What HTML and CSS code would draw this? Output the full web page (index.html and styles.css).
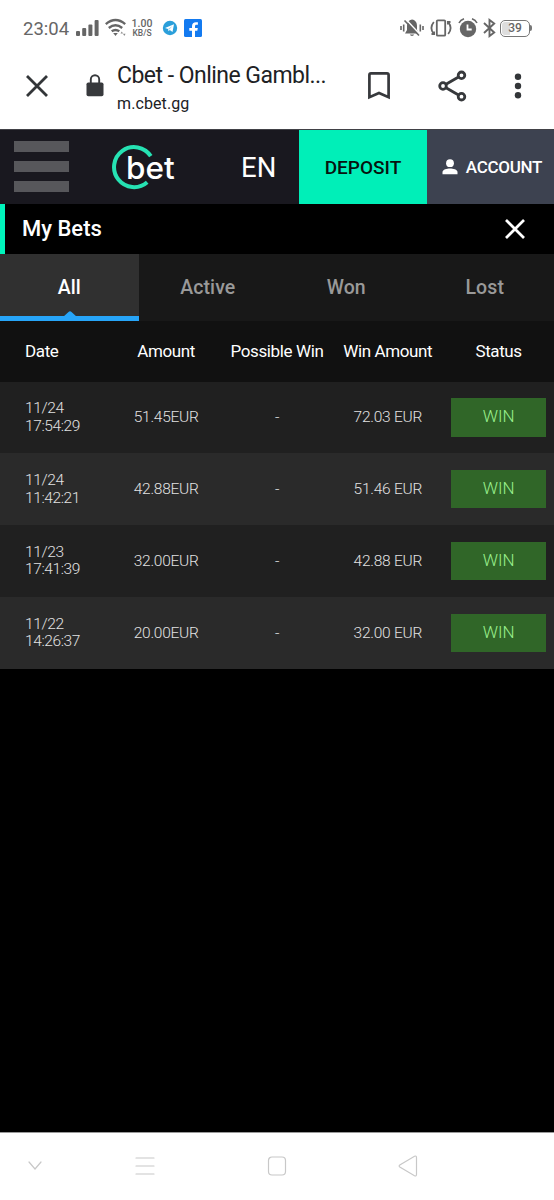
FILE: index.html
```html
<!DOCTYPE html>
<html lang="en">
<head>
<meta charset="utf-8">
<title>Cbet - My Bets</title>
<link rel="stylesheet" href="styles.css">
</head>
<body>
<div class="status-bar">
  <span class="clock">23:04</span>
  <svg class="ic-signal" width="24" height="20" viewBox="0 0 24 20" fill="#666"><rect x="0" y="13" width="4" height="5" rx="1"/><rect x="6.2" y="10" width="4" height="8" rx="1"/><rect x="12.4" y="6.5" width="4" height="11.5" rx="1"/><rect x="18.6" y="2" width="4" height="16" rx="1"/></svg>
  <svg class="ic-wifi" width="22" height="20" viewBox="0 0 22 20" fill="none" stroke="#666" stroke-width="2.4"><path d="M.8 6.200Q10.500-2 20.200 6.200M3.800 10Q10.500 4.500 17.200 10M6.700 13.300Q10.500 10.500 14.300 13.300"/><path d="M8.200 15h4.600l-2.300 3z" fill="#666" stroke="none"/><path d="M15.500 15.500h2.500l-1.200-2zM18 15.800h2.600l-1.300 2.200z" fill="#888" stroke="none"/></svg>
  <span class="speed"><span class="speed-num">1.00</span><span class="speed-unit">KB/S</span></span>
  <svg class="ic-telegram" width="16" height="16" viewBox="0 0 16 16"><circle cx="8" cy="8" r="7.200" fill="#2b9fda"/><path d="M3 8l9-3.700-1.500 7.700-2.700-2-1.300 1.300-.4-2.300z" fill="#fff"/><path d="M6 9l4.500-3-3.200 3.600z" fill="#9bcfea"/></svg>
  <svg class="ic-fb" width="18" height="18" viewBox="0 0 18 18"><rect width="18" height="18" rx="1.500" fill="#137af0"/><path d="M8 18v-6.300H5.300V9H8V7.200C8 4.500 9.500 3.200 12 3.200l1.900.1v2.500h-1.300c-1.300 0-1.600.6-1.600 1.600V9h2.800l-.5 2.700H11V18z" fill="#fff"/></svg>
  <div class="status-right">
    <svg width="24" height="20" viewBox="0 0 24 20"><path d="M12 1.500c3.500.6 5 3 5 6.500v4l2 3.500H5L7 12V8c0-3.500 1.500-5.900 5-6.500zM9.800 16.500h4.400a2.300 2 0 0 1-4.400 0z" fill="#666"/><path d="M5.800 1.300l14 15" stroke="#fff" stroke-width="1.600"/><path d="M4.500 2.500l14.500 15M1 8v4M3.700 6.500v7M20.300 6.500v7M23 8v4" stroke="#666" stroke-width="1.600"/></svg>
    <svg width="22" height="20" viewBox="0 0 22 20" fill="none" stroke="#666" stroke-width="1.800"><rect x="6.800" y="2.300" width="8.400" height="15.400" rx="1"/><path d="M3.800 4Q-1 10 3.800 16M18.200 4q4.800 6 0 12M1.500 16h2.600v-2.500M20.500 4h-2.600v2.500"/></svg>
    <svg width="20" height="20" viewBox="0 0 20 20" fill="none"><circle cx="10" cy="11" r="8.200" fill="#666"/><path d="M1 5q1.500-3 5-4.200M14 .8q3.500 1.200 5 4.200" stroke="#666" stroke-width="1.600"/><path d="M9.500 6.500v5h4.200" stroke="#fff" stroke-width="1.800"/></svg>
    <svg class="ic-bt" width="13" height="20" viewBox="0 0 13 20" fill="none" stroke="#666" stroke-width="1.900"><path d="M1 5l10.200 9.500L6.500 18V2l4.700 3.500L1 15"/></svg>
    <span class="battery"><span>39</span></span>
  </div>
</div>

<div class="browser-bar">
  <svg class="ic-close" width="24" height="24" viewBox="0 0 24 24" stroke="#333639" stroke-width="2.800"><path d="M2 2l20 20M22 2L2 22"/></svg>
  <svg class="ic-lock" width="18" height="24" viewBox="0 0 18 24"><rect x=".5" y="8.500" width="17" height="13.700" rx="1.800" fill="#37393c"/><path d="M4.800 9V5.500a4.200 4.200 0 0 1 8.400 0V9" fill="none" stroke="#37393c" stroke-width="1.900"/></svg>
  <div class="page-info"><div class="page-title">Cbet - Online Gambl...</div><div class="page-url">m.cbet.gg</div></div>
  <svg class="ic-bookmark" width="22" height="28" viewBox="0 0 22 28" fill="none" stroke="#37393c" stroke-width="2.700"><path d="M1.400 25.200V3q0-1.600 1.600-1.600h16q1.600 0 1.600 1.600v22.200L11 20.900z"/></svg>
  <svg class="ic-share" width="30" height="32" viewBox="0 0 30 32" fill="none" stroke="#37393c" stroke-width="2.800"><circle cx="5" cy="16" r="3.300"/><circle cx="23.500" cy="5.300" r="3.300"/><circle cx="23.500" cy="26.700" r="3.300"/><path d="M8 14.300l12.500-7.300M8 17.700l12.500 7.300"/></svg>
  <svg class="ic-more" width="8" height="28" viewBox="0 0 8 28" fill="#333639"><circle cx="4" cy="4.700" r="3.200"/><circle cx="4" cy="14" r="3.200"/><circle cx="4" cy="23.300" r="3.200"/></svg>
</div>

<header class="site-header">
  <div class="burger"><i></i><i></i><i></i></div>
  <div class="logo">
    <svg width="46" height="46" viewBox="0 0 46 46" fill="none" stroke="#26e2b3" stroke-width="4"><path d="M38.800 11.200A20 20 0 1 0 35.200 37.200"/></svg>
    <span class="logo-text">bet</span>
  </div>
  <span class="lang">EN</span>
  <div class="deposit">DEPOSIT</div>
  <div class="account"><svg width="16" height="16" viewBox="0 0 16 16" fill="#fff"><circle cx="8" cy="4.200" r="3.900"/><path d="M.5 15.300v-2.200c0-2.700 4.500-3.700 7.500-3.700s7.500 1 7.500 3.700v2.200z"/></svg><span>ACCOUNT</span></div>
</header>

<main class="content">
  <div class="panel-title"><h1>My Bets</h1><svg width="20" height="20" viewBox="0 0 20 20" stroke="#fff" stroke-width="2.700"><path d="M1 1l18 18M19 1L1 19"/></svg></div>
  <nav class="tabs"><div class="tab active">All<svg class="notch" width="14" height="6" viewBox="0 0 14 6"><path d="M0 6L5.500 1Q7-.5 8.500 1L14 6z" fill="#27a5f8"/></svg></div><div class="tab">Active</div><div class="tab">Won</div><div class="tab">Lost</div></nav>
  <div class="row head"><div class="date">Date</div><div>Amount</div><div>Possible Win</div><div>Win Amount</div><div>Status</div></div>
  <div class="row"><div class="date">11/24<br>17:54:29</div><div class="cell">51.45EUR</div><div class="cell">-</div><div class="cell">72.03 EUR</div><div><span class="badge">WIN</span></div></div>
  <div class="row alt"><div class="date">11/24<br>11:42:21</div><div class="cell">42.88EUR</div><div class="cell">-</div><div class="cell">51.46 EUR</div><div><span class="badge">WIN</span></div></div>
  <div class="row"><div class="date">11/23<br>17:41:39</div><div class="cell">32.00EUR</div><div class="cell">-</div><div class="cell">42.88 EUR</div><div><span class="badge">WIN</span></div></div>
  <div class="row alt"><div class="date">11/22<br>14:26:37</div><div class="cell">20.00EUR</div><div class="cell">-</div><div class="cell">32.00 EUR</div><div><span class="badge">WIN</span></div></div>
</main>

<footer class="nav-bar">
  <svg class="nav-down" width="14" height="10" viewBox="0 0 14 10"><path d="M1 1l6 7 6-7"/></svg>
  <svg class="nav-menu" width="20" height="20" viewBox="0 0 20 20"><path d="M1 2h18M1 10h18M1 18h18"/></svg>
  <svg class="nav-home" width="20" height="20" viewBox="0 0 20 20"><rect x="1.500" y="1" width="17" height="18" rx="3.500"/></svg>
  <svg class="nav-back" width="20" height="22" viewBox="0 0 20 22"><path d="M1.800 10Q.5 11 1.800 12L16.500 20.800Q18.500 21.500 18.500 19.500V2.500Q18.500.5 16.500 1.200z"/></svg>
</footer>
</body>
</html>
```
FILE: styles.css
```css
* { box-sizing: border-box; }
body {
  margin: 0;
  width: 554px;
  height: 1200px;
  display: flex;
  flex-direction: column;
  background: #fff;
  font-family: Roboto, "Liberation Sans", sans-serif;
  overflow: hidden;
}
svg { display: block; flex: none; }

.status-bar {
  height: 56px;
  flex: none;
  display: flex;
  align-items: center;
  padding: 0 23px;
  color: #666;
}
.clock { width: 53px; font-size: 18.5px; padding-top: 1px; }
.ic-wifi { margin-left: 5px; }
.speed { width: 22px; margin-left: 4px; display: flex; flex-direction: column; align-items: center; }
.speed-num { font-size: 10.5px; line-height: 10px; font-weight: 500; }
.speed-unit { font-size: 8.5px; line-height: 9px; font-weight: 500; }
.ic-telegram { margin-left: 9px; }
.ic-fb { margin-left: 6px; }
.status-right { margin-left: auto; display: flex; align-items: center; gap: 6px; }
.ic-bt { margin: 0 -2px 0 -1px; }
.battery {
  position: relative;
  width: 30px;
  height: 17px;
  margin-right: 1px;
  border: 1.5px solid #777;
  border-radius: 5px;
  font-size: 12px;
  font-weight: 500;
  line-height: 14px;
  text-align: center;
  background: linear-gradient(90deg, #ddd 9px, #fff 9px);
  background-clip: content-box;
  padding: 1px;
}
.battery span { display: block; margin-top: -1px; }
.battery::after { content: ""; position: absolute; right: -3px; top: 4px; width: 2px; height: 6px; background: #777; border-radius: 0 2px 2px 0; }

.browser-bar { height: 73px; flex: none; display: flex; align-items: flex-start; padding-left: 25px; }
.ic-close { margin-top: 18px; }
.ic-lock { margin: 18px 0 0 37px; }
.page-info { width: 248px; margin: 5px 0 0 13px; color: #202124; white-space: nowrap; }
.page-title { font-size: 23px; line-height: 30px; letter-spacing: -0.53px; }
.page-url { font-size: 16px; line-height: 20px; margin-top: 3px; letter-spacing: .1px; }
.ic-bookmark { margin: 16px 0 0 3px; }
.ic-share { margin: 14px 0 0 48px; }
.ic-more { margin: 16px 0 0 46px; }

.site-header { height: 75px; flex: none; display: flex; align-items: center; background: #19181f; border-top: 1px solid #414146; color: #fff; }
.burger { width: 55px; margin: -1px 0 0 14px; display: flex; flex-direction: column; gap: 9px; }
.burger i { height: 11px; background: #57575b; }
.logo { position: relative; width: 68px; height: 46px; margin: 2px 0 0 43px; }
.logo-text { position: absolute; left: 14px; top: 3px; font: 500 31.5px/40px Inter, sans-serif; }
.lang { width: 58px; margin-left: 61px; font-size: 27.5px; }
.deposit, .account { align-self: stretch; display: flex; align-items: center; justify-content: center; font-weight: 500; }
.deposit { width: 128px; background: #00efb8; color: #07130f; font-size: 19px; }
.account { width: 127px; background: #3d4250; font-size: 17px; gap: 8px; padding-left: 2px; letter-spacing: -0.3px; }
.account span { margin-right: -1px; }

.content { flex: 1; background: #000; color: #fff; }
.panel-title { height: 50px; display: flex; align-items: center; justify-content: space-between; border-left: 5px solid #00f5bc; padding: 0 29px 0 17px; }
.panel-title h1 { margin: -1px 0 0; font-size: 22px; font-weight: 500; }
.tabs { display: grid; grid-template-columns: repeat(4, 1fr); height: 67px; background: #181818; }
.tab { position: relative; display: flex; align-items: center; justify-content: center; padding-bottom: 1px; font-size: 19.5px; font-weight: 500; color: #999; letter-spacing: .1px; }
.active { color: #fff; background: #303030; border-bottom: 5px solid #27a5f8; padding: 4px 0 0; }
.notch { position: absolute; bottom: -1px; left: 63px; }

.row { height: 71.8px; display: grid; grid-template-columns: repeat(5, 1fr); align-items: center; background: #202020; color: #e2e2e2; font-size: 15.5px; font-weight: 300; line-height: 17.5px; text-align: center; letter-spacing: -0.25px; }
.row.alt { background: #2a2a2a; }
.row.head { height: 60.5px; background: #111; color: #fff; font-size: 17px; font-weight: 400; line-height: 20px; white-space: nowrap; letter-spacing: -0.38px; padding-bottom: 1px; }
.row .date { padding: 1px 0 0 25px; text-align: left; letter-spacing: -0.38px; }
.cell { padding-top: 1px; }
.head .date { padding-top: 0; }
.badge { display: block; height: 38.5px; margin: 0 8px; background: #306628; color: #99ef8c; font-size: 17px; line-height: 37px; letter-spacing: -0.1px; }

.nav-bar { height: 68px; flex: none; display: flex; align-items: center; border-top: 1px solid #999; padding: 0 0 1px 28px; }
.nav-bar svg { fill: none; stroke: #c8c8c8; stroke-width: 1.2; stroke-linecap: round; }
.nav-menu { margin-left: 93px; }
.nav-home { margin-left: 112px; }
.nav-back { margin-left: 111px; }
```
